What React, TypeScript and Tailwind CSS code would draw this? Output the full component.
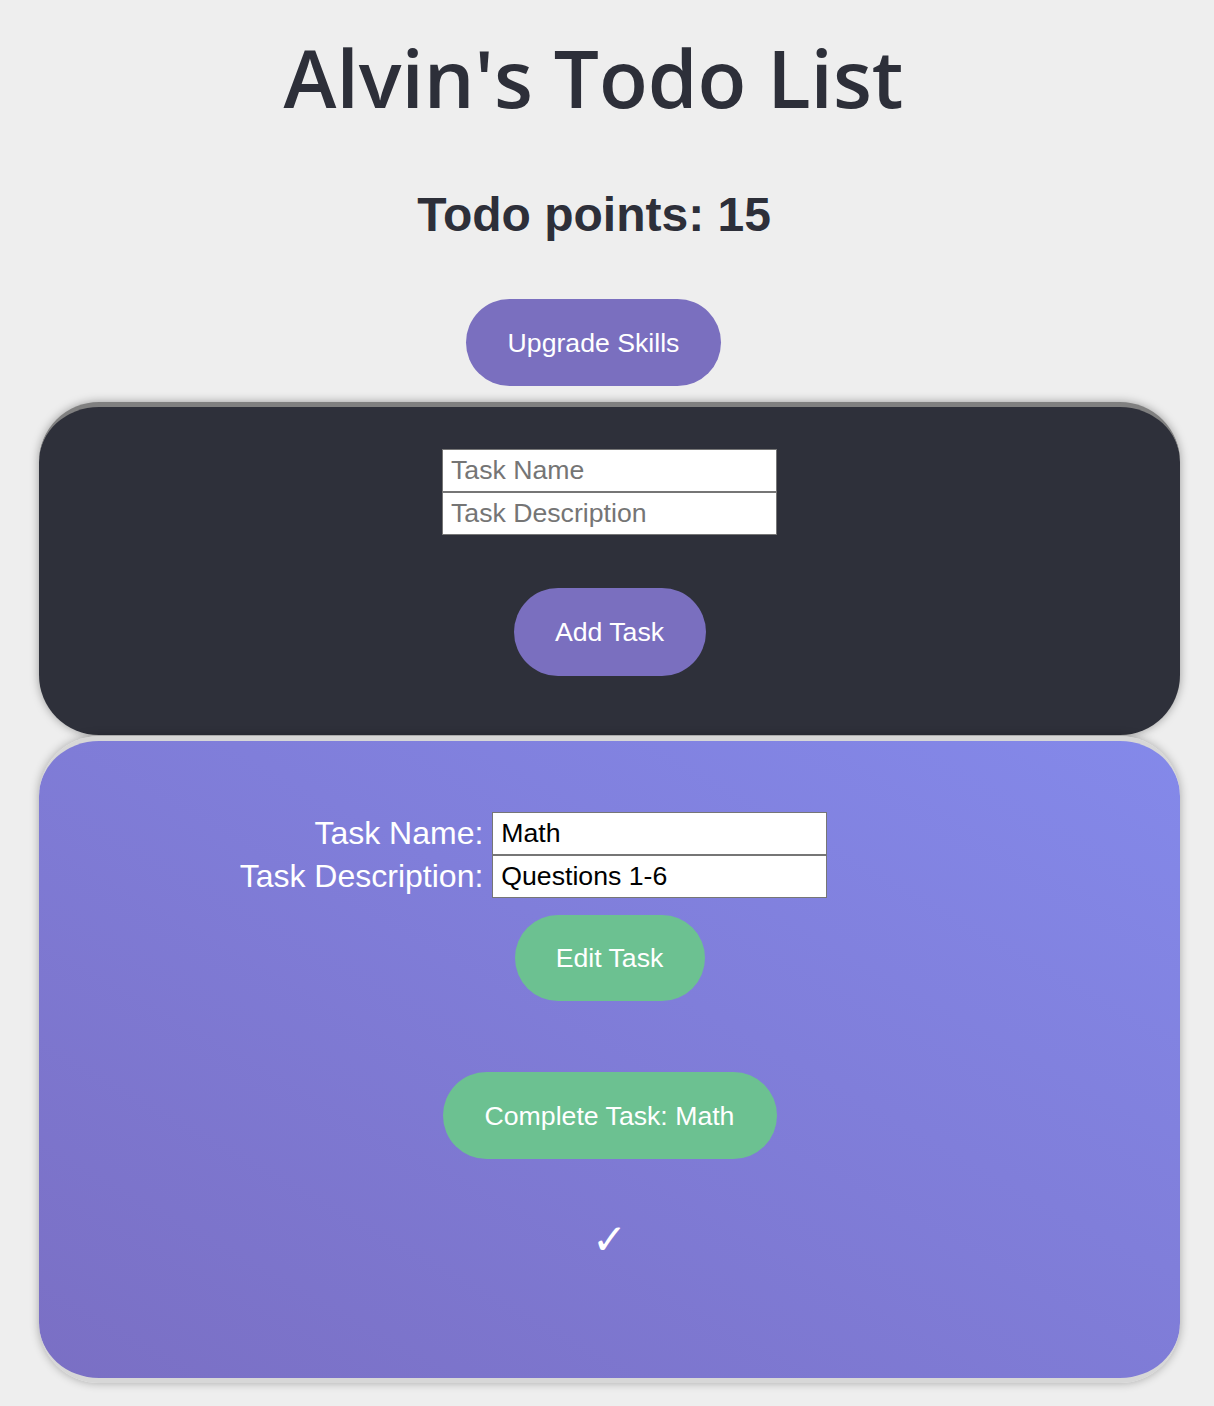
import React, { useState } from 'react';

const App: React.FC = () => {
  const [points] = useState(15);
  const [name, setName] = useState('Math');
  const [desc, setDesc] = useState('Questions 1-6');

  const pill = "rounded-full text-white text-[26.67px] font-['Liberation_Sans',Arial,sans-serif]";
  const field = "w-[335px] h-[43px] bg-white border border-[#767676] px-2 text-[26.67px] text-black outline-none font-['Liberation_Sans',Arial,sans-serif]";

  return (
    <div className="min-h-[1406px] bg-[#eeeeee] flex flex-col items-center font-['Liberation_Sans',Arial,sans-serif] text-[#2d2f39] overflow-hidden">
      <h1 className="mt-[22px] mr-[27px] text-[80px] leading-[109px] font-['Open_Sans',sans-serif] font-semibold">
        Alvin's Todo List
      </h1>
      <h2 className="mt-[56px] mr-[26px] text-[48px] leading-[55px] font-bold">Todo points: {points}</h2>
      <button className={`${pill} mt-[57px] mr-[27px] w-[255px] h-[87px] bg-[#7a6fbf]`}>Upgrade Skills</button>

      {/* New task */}
      <div className="mt-[16px] ml-[5px] w-[1141px] h-[333px] rounded-[60px] bg-[#2e303a] border-t-[5px] border-[#808080] shadow-[0_0_10px_rgba(0,0,0,0.35)] flex flex-col items-center pt-[42px]">
        <div className="flex flex-col">
          <input placeholder="Task Name" className={`${field} placeholder:text-[#757575]`} />
          <input placeholder="Task Description" className={`${field} placeholder:text-[#757575]`} />
        </div>
        <button className={`${pill} mt-[53px] w-[192px] h-[88px] bg-[#7a6fbf]`}>Add Task</button>
      </div>

      {/* Task card */}
      <div className="mt-[1px] ml-[5px] w-[1141px] h-[647px] rounded-[60px] bg-linear-to-tr from-[#7a6fc4] to-[#8489ea] border-y-[5px] border-[#d7d7d7] shadow-[0_0_10px_rgba(0,0,0,0.3)] flex flex-col items-center pt-[71px]">
        <div className="grid grid-cols-[auto_auto] items-center ml-[-152px]">
          <label className="text-white text-[32px] leading-[43px] text-right pr-[9px]">Task Name:</label>
          <input value={name} onChange={(e) => setName(e.target.value)} className={field} />
          <label className="text-white text-[32px] leading-[43px] text-right pr-[9px]">Task Description:</label>
          <input value={desc} onChange={(e) => setDesc(e.target.value)} className={field} />
        </div>
        <button className={`${pill} mt-[17px] w-[190px] h-[86px] bg-[#6cc191]`}>Edit Task</button>
        <button className={`${pill} mt-[71px] w-[334px] h-[87px] bg-[#6cc191]`}>Complete Task: {name}</button>
        <div className="mt-[56px] text-white text-[42px] leading-[50px] font-bold font-['DejaVu_Sans',sans-serif]">✓</div>
      </div>
    </div>
  );
};

export default App;
